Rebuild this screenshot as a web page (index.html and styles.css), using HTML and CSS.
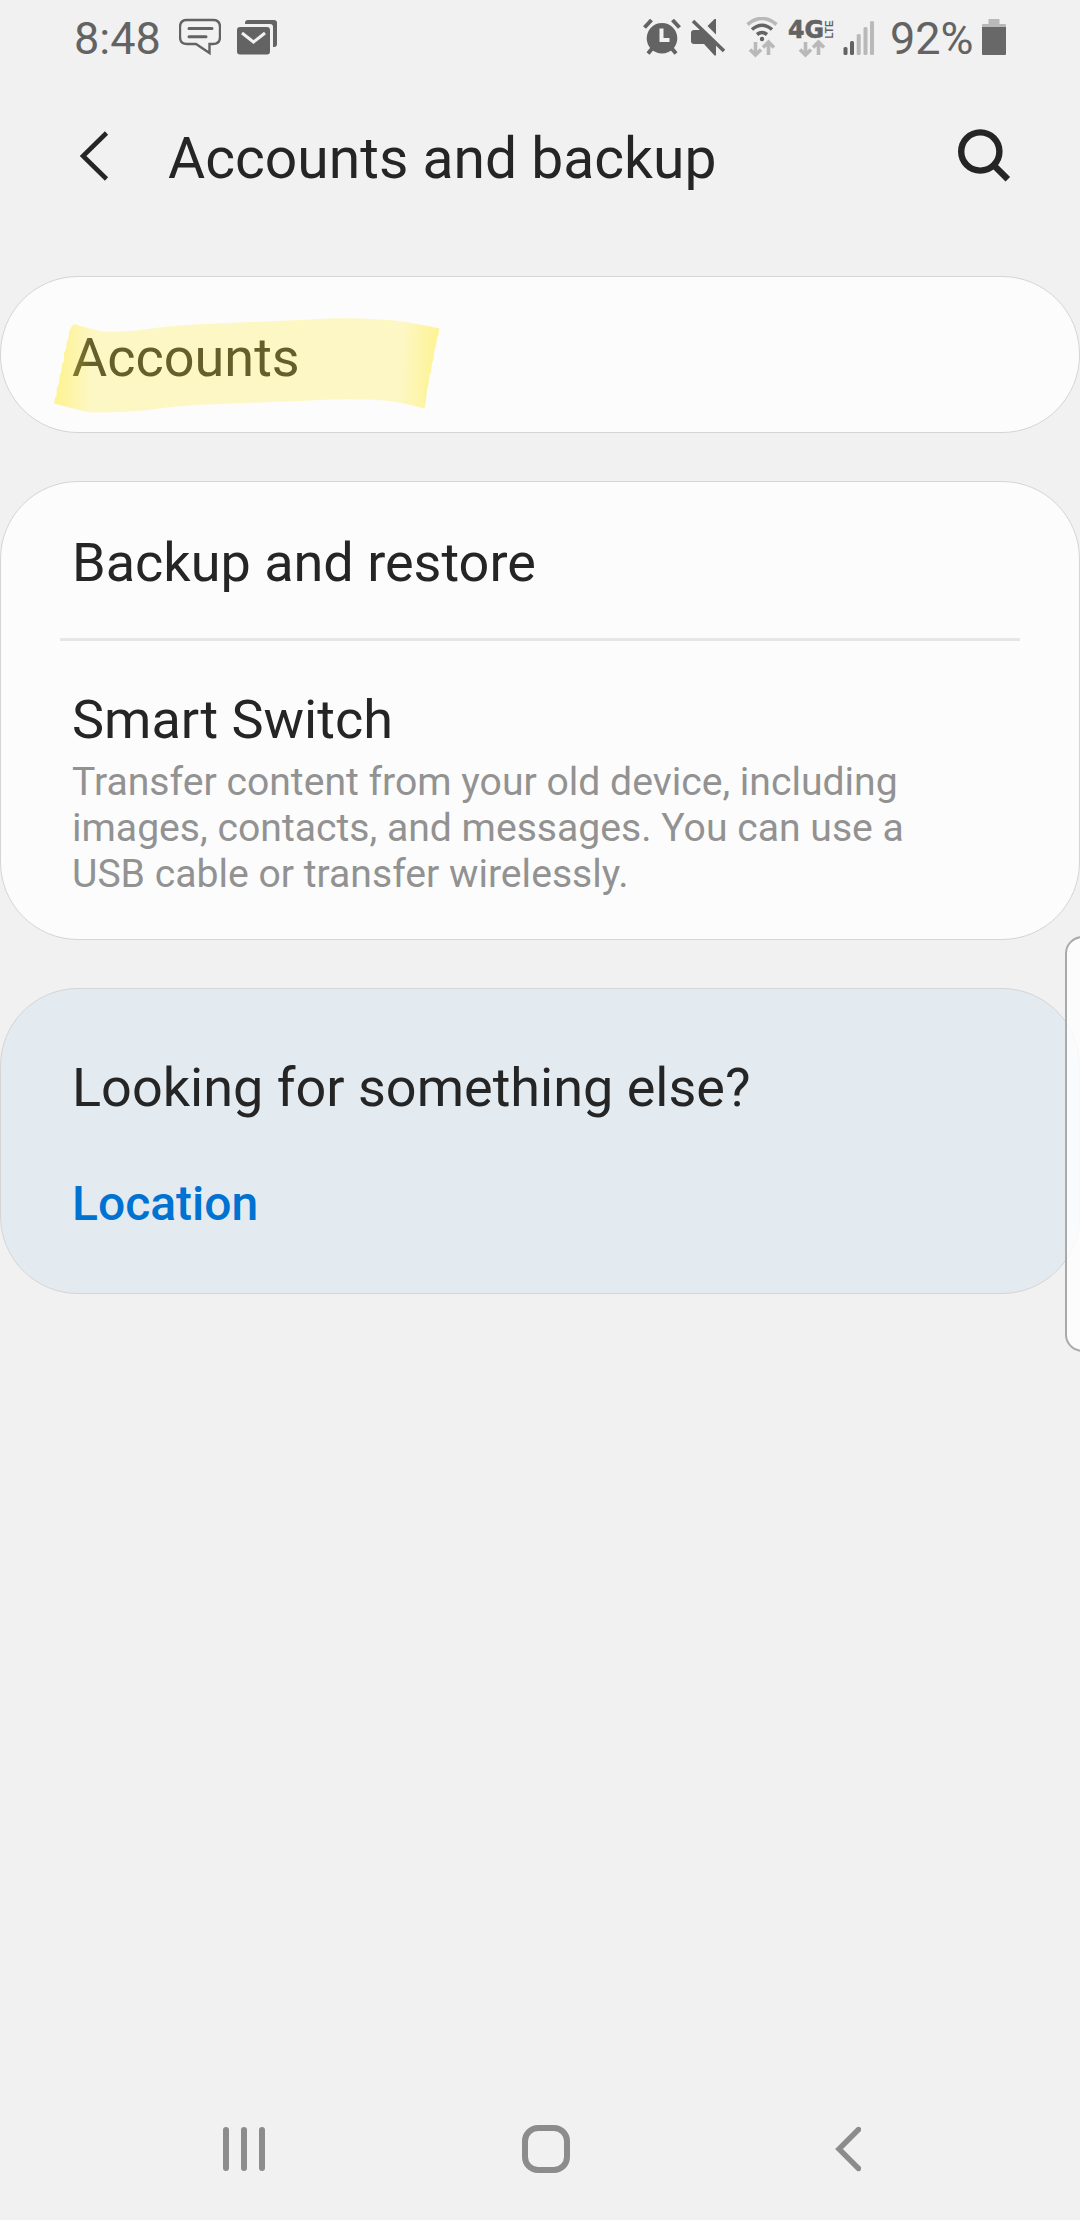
FILE: index.html
```html
<!DOCTYPE html>
<html lang="en">
<head>
    <meta charset="UTF-8">
    <meta name="viewport" content="width=device-width, initial-scale=1.0">
    <title>Accounts and backup</title>
    <link rel="stylesheet" href="styles.css">
</head>
<body>
    <div class="screen">
        <div class="status-bar">
            <span class="status-text time">8:48</span>
            <svg class="icon-chat" width="42" height="40" viewBox="0 0 42 40">
                <path d="M8 3h26q7 0 7 7v10q0 7-7 7h-3.5v9L17 27H8q-7 0-7-7V10q0-7 7-7z" fill="none" stroke="#636363" stroke-width="2.400"/>
                <path d="M10 11.500h23M10 19.700h17" stroke="#636363" stroke-width="3" stroke-linecap="round"/>
            </svg>
            <svg class="icon-mail" width="40" height="40" viewBox="0 0 40 40">
                <path d="M8 7V6q0-3 3-3h26q3 0 3 3v21q0 3-3 3h-1V10q0-3-3-3z" fill="#636363"/>
                <rect x="0" y="10" width="33" height="27.500" rx="3" fill="#636363"/>
                <path d="M5 16l11.500 9L28 16" fill="none" stroke="#f1f1f1" stroke-width="3"/>
            </svg>

            <span class="spacer"></span>

            <svg class="icon-alarm" width="38" height="40" viewBox="0 0 38 40">
                <circle cx="19" cy="21.300" r="15.300" fill="#636363"/>
                <path d="M1.500 10.500l7-7.500M36.500 10.500l-7-7.500M5 36.500l5-6M33 36.500l-5-6" stroke="#636363" stroke-width="4"/>
                <path d="M18.500 11.500v11.500h8" fill="none" stroke="#f1f1f1" stroke-width="4"/>
            </svg>
            <svg class="icon-mute" width="36" height="40" viewBox="0 0 36 40">
                <path d="M3 13h7l15 15v10.500h-1.500L13 27H3q-3 0-3-3v-8q0-3 3-3zM25 2v15.500L16.500 9l7-7z" fill="#636363"/>
                <path d="M2 4l31 30" stroke="#636363" stroke-width="3.600"/>
            </svg>
            <svg class="icon-wifi" width="32" height="41" viewBox="0 0 32 41">
                <path d="M1.500 7.500Q16-4.500 30.500 7.500" fill="none" stroke="#b9b9b9" stroke-width="3.600"/>
                <path d="M6 12.500q10-8.500 20 0M11 17.500q5-4 10 0" fill="none" stroke="#636363" stroke-width="3.600"/>
                <circle cx="16" cy="22" r="2.200" fill="#636363"/>
                <path d="M9.500 25v13M4 32.500l5.500 5.500 5.500-5.500M22.500 38V25M17 30.500l5.500-5.500 5.500 5.500" fill="none" stroke="#b9b9b9" stroke-width="3.600"/>
            </svg>
            <svg class="icon-4g" width="46" height="41" viewBox="0 0 46 41">
                <text class="net" x="0" y="21" textLength="36" lengthAdjust="spacingAndGlyphs">4G</text>
                <text class="lte" transform="translate(45 21.500) rotate(-90)" x="0" y="0" textLength="18" lengthAdjust="spacingAndGlyphs">LTE</text>
                <path d="M17.500 25v13M12 32.500l5.500 5.500 5.500-5.500M30.500 38V25M25 30.500l5.500-5.500 5.500 5.500" fill="none" stroke="#b9b9b9" stroke-width="3.600"/>
            </svg>
            <svg class="icon-signal" width="31" height="40" viewBox="0 0 31 40">
                <rect x="0.500" y="30" width="4" height="8" rx="1.500" fill="#636363"/>
                <rect x="7" y="24" width="4" height="14" rx="1.500" fill="#636363"/>
                <rect x="13.700" y="17" width="4" height="21" rx="1.500" fill="#b9b9b9"/>
                <rect x="20.500" y="10" width="4" height="28" rx="1.500" fill="#b9b9b9"/>
                <rect x="27" y="4" width="4" height="34" rx="1.500" fill="#b9b9b9"/>
            </svg>
            <span class="status-text battery-level">92%</span>
            <svg class="icon-battery" width="24" height="40" viewBox="0 0 24 40">
                <path d="M6.500 2h11v5H23q1 0 1 1v3H0V8q0-1 1-1h5.500z" fill="#b9b9b9"/>
                <path d="M0 10h24v27q0 1-1 1H1q-1 0-1-1z" fill="#686868"/>
            </svg>
        </div>

        <div class="header">
            <svg class="icon-back" width="30" height="50" viewBox="0 0 30 50">
                <path d="M26.500 2L3 25l23.500 23" fill="none" stroke="#252525" stroke-width="4.600"/>
            </svg>
            <h1>Accounts and backup</h1>
            <svg class="icon-search" width="54" height="54" viewBox="0 0 54 54">
                <circle cx="22.300" cy="22.500" r="19.100" fill="none" stroke="#252525" stroke-width="6.400"/>
                <path d="M35.500 36l14.300 14.300" stroke="#252525" stroke-width="6.400"/>
            </svg>
        </div>

        <div class="card">
            <div class="row row-accounts">
                <h2>Accounts</h2>
                <svg class="highlight" width="400" height="110" viewBox="50 310 400 110">
                    <defs>
                        <linearGradient id="marker" gradientUnits="userSpaceOnUse" x1="62" y1="360" x2="434" y2="375">
                            <stop offset="0" stop-color="#ffeb3b" stop-opacity="0.52"/>
                            <stop offset="0.080" stop-color="#ffeb3b" stop-opacity="0.29"/>
                            <stop offset="0.910" stop-color="#ffeb3b" stop-opacity="0.29"/>
                            <stop offset="1" stop-color="#ffeb3b" stop-opacity="0.52"/>
                        </linearGradient>
                    </defs>
                    <path d="M74 324Q90 329 103 331.500Q130 332 148 329Q170 325.500 195 324.500L310 319.500Q350 317 390 320Q410 322 439.500 328.500l-1.500 8-1 1-1 9-1.500 3-1 10-1.500 4-1 9-1.500 2-1 10-1.500 6-1 10-1.500 8Q400 402 385 400.500Q350 398 310 400.500L195 405Q170 406.500 148 410Q120 413 90 412.500Q70 408 54 403.500l1-6 1.500-2 .500-8 2-4 .500-8 2-4 .500-7 2-3 0-8 2-5 1-8 1.500-2 .500-7 2-4z" fill="url(#marker)"/>
                </svg>
            </div>
        </div>

        <div class="card">
            <div class="row">
                <h2>Backup and restore</h2>
            </div>
            <div class="divider"></div>
            <div class="row row-switch">
                <h2>Smart Switch</h2>
                <p>Transfer content from your old device, including images, contacts, and messages. You can use a USB cable or transfer wirelessly.</p>
            </div>
        </div>

        <div class="card card-suggest">
            <h2>Looking for something else?</h2>
            <a class="link">Location</a>
        </div>

        <div class="nav-bar">
            <svg class="nav-recents" width="42" height="46" viewBox="0 0 42 46">
                <path d="M3 4v38M21 4v38M39 4v38" stroke="#8c8c8c" stroke-width="6" stroke-linecap="round"/>
            </svg>
            <svg class="nav-home" width="48" height="48" viewBox="0 0 48 48">
                <rect x="3" y="3" width="42" height="42" rx="13" fill="none" stroke="#8c8c8c" stroke-width="6"/>
            </svg>
            <svg class="nav-back" width="26" height="46" viewBox="0 0 26 46">
                <path d="M23.500 3.500L4 23l19.500 19.500" fill="none" stroke="#8c8c8c" stroke-width="5.400" stroke-linecap="round"/>
            </svg>
        </div>

        <div class="edge-panel"></div>
    </div>
</body>
</html>
```
FILE: styles.css
```css
* {
    box-sizing: border-box;
    margin: 0;
    padding: 0;
}

body {
    font-family: Roboto, sans-serif;
    background-color: #f1f1f1;
    color: #252525;
}

svg {
    display: block;
    flex: none;
}

.screen {
    position: relative;
    display: flex;
    flex-direction: column;
    width: 1080px;
    height: 2220px;
    overflow: hidden;
}

/* Status bar */
.status-bar {
    display: flex;
    align-items: flex-start;
    height: 74px;
    padding: 17px 74px 0 74px;
}

.status-text {
    font-size: 45px;
    line-height: 44px;
    color: #636363;
}

.time {
    width: 105px;
}

.icon-mail {
    margin-left: 16px;
}

.spacer {
    flex: 1;
}

.icon-mute {
    margin-left: 10px;
}

.icon-wifi {
    margin-left: 19px;
}

.icon-4g {
    margin-left: 10px;
}

.icon-signal {
    margin-left: 9px;
}

.battery-level {
    width: 92px;
    margin-left: 16px;
}

.net {
    font: bold 24px "DejaVu Sans", sans-serif;
    fill: #636363;
    stroke: #636363;
    stroke-width: 0.6px;
}

.lte {
    font: bold 11px "Liberation Sans", sans-serif;
    fill: #636363;
}

/* Title */
.header {
    display: flex;
    align-items: center;
    height: 164px;
    margin-bottom: 38px;
    padding: 0 68px 0 80px;
}

h1 {
    flex: 1;
    margin-left: 58px;
    padding-top: 5px;
    font-size: 57px;
    font-weight: 400;
    line-height: 68px;
}

/* Cards */
.card {
    margin-bottom: 48px;
    border: 1px solid #d5d5d5;
    border-radius: 78px;
    background-color: #fcfcfc;
}

.row {
    position: relative;
    height: 156px;
    padding: 49px 71px 0 71px;
}

.row-accounts {
    height: 155px;
}

h2 {
    font-size: 54px;
    font-weight: 400;
    line-height: 64px;
}

.row-switch {
    height: 298px;
    padding-top: 47px;
}

.row p {
    width: 880px;
    margin-top: 7px;
    font-size: 39.15px;
    line-height: 46px;
    color: #929292;
}

.divider {
    height: 3px;
    margin: 0 59px;
    background-color: #e6e6e6;
}

.highlight {
    position: absolute;
    left: 49px;
    top: 33px;
}

.card-suggest {
    height: 306px;
    padding: 67px 71px 0 71px;
    background-color: #e3eaf0;
}

.link {
    display: block;
    margin-top: 56px;
    font-size: 48px;
    font-weight: 500;
    line-height: 56px;
    color: #0072d2;
}

/* Navigation */
.nav-bar {
    display: flex;
    align-items: center;
    justify-content: space-between;
    height: 144px;
    margin-top: auto;
    padding: 2px 219px 0 223px;
}

.nav-home {
    margin-right: 8px;
}

.edge-panel {
    position: absolute;
    top: 936px;
    right: -20px;
    width: 35px;
    height: 416px;
    border: 2px solid #aaa;
    border-radius: 18px;
    background-color: rgba(255, 255, 255, 0.8);
}
```
